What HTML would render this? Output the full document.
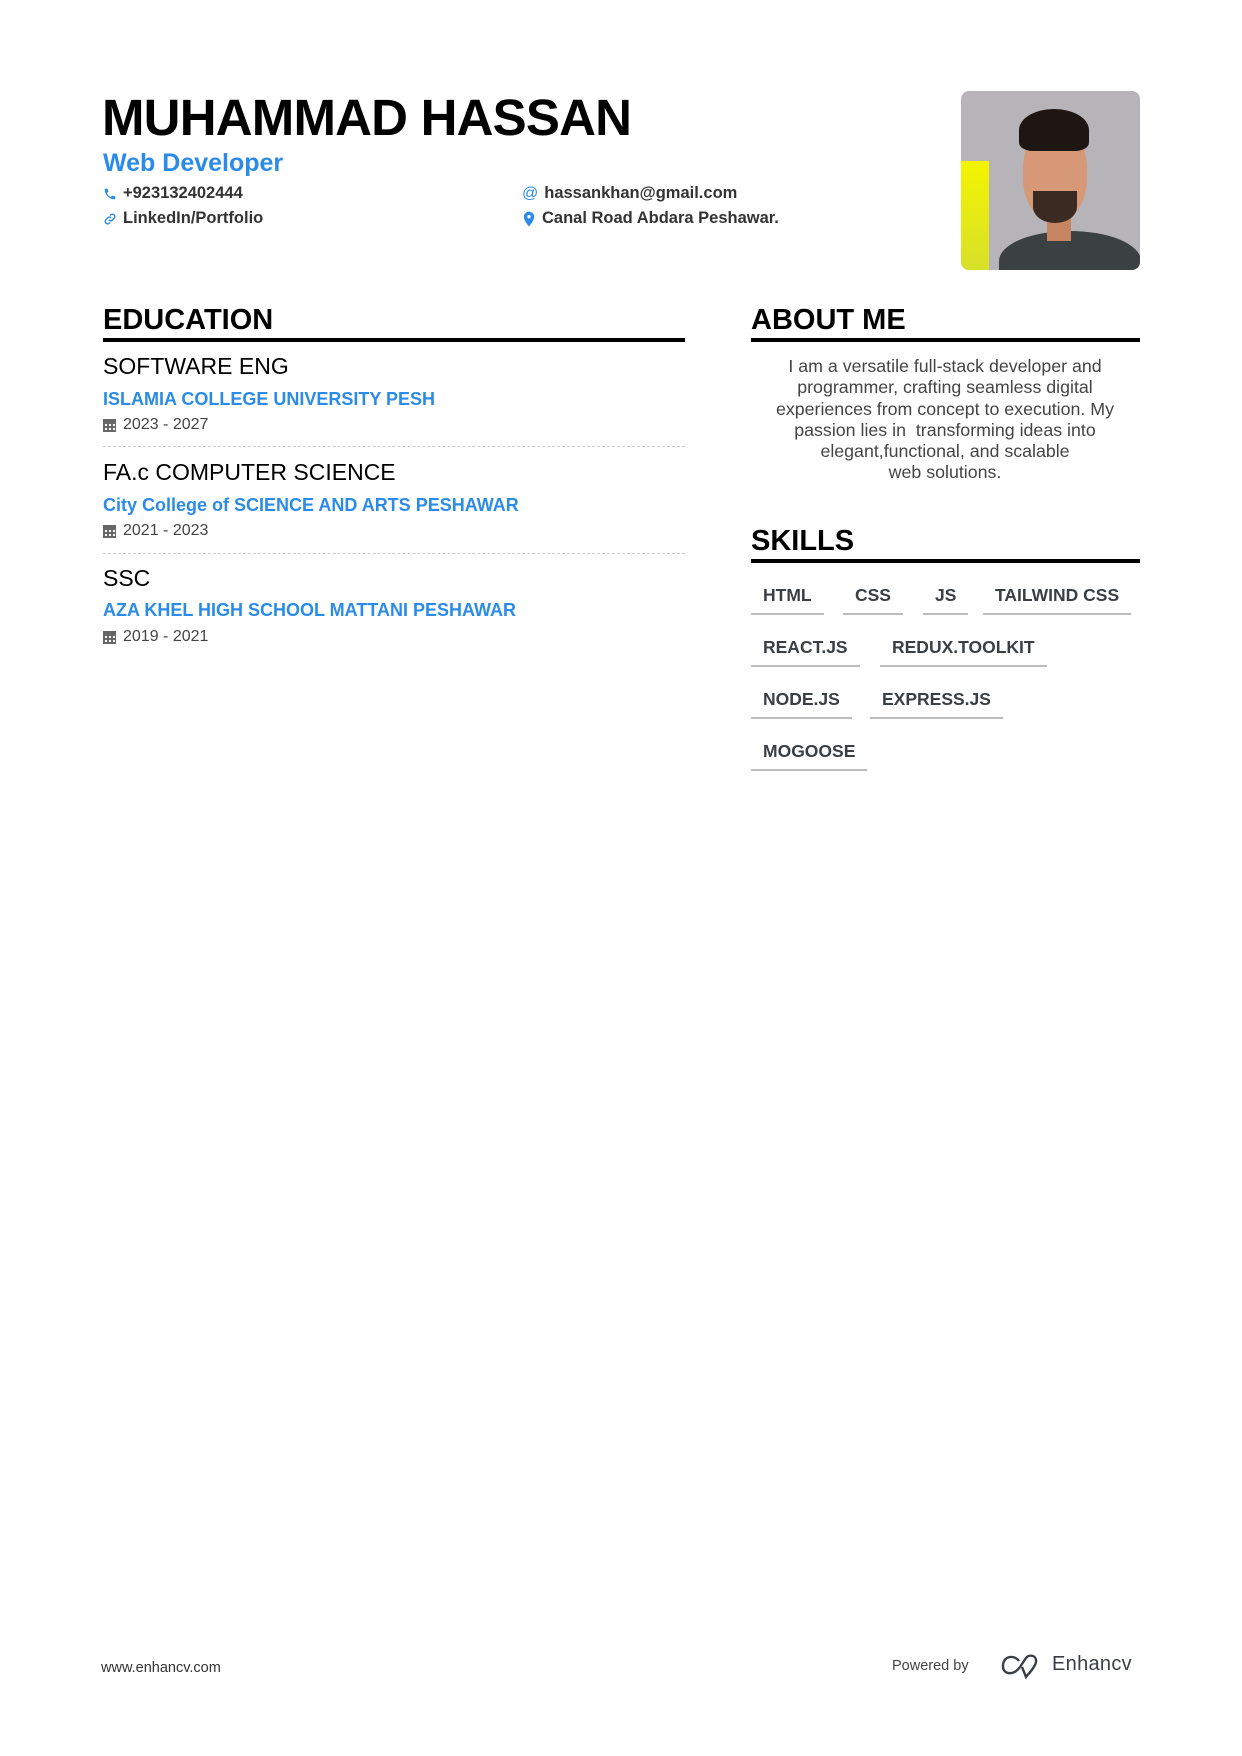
<!DOCTYPE html>
<html><head><meta charset="utf-8"><style>
*{margin:0;padding:0;box-sizing:border-box}
body{width:1242px;height:1756px;background:#fff;font-family:"Liberation Sans",sans-serif;position:relative;overflow:hidden;color:#000}
.a{position:absolute;white-space:nowrap}
.name{left:102px;top:88px;font-size:51px;font-weight:bold;letter-spacing:-0.8px}
.role{left:103px;top:149px;font-size:25px;font-weight:bold;color:#2b8be8}
.ct{font-size:16.5px;font-weight:bold;color:#333;display:flex;align-items:center;gap:6px}
.h{font-size:29px;font-weight:bold;line-height:1}
.rule{position:absolute;height:4px;background:#000}
.deg{left:103px;font-size:23px;color:#000}
.sch{left:103px;font-size:18px;font-weight:bold;color:#2b8be8}
.dt{left:103px;font-size:16px;color:#444;display:flex;align-items:center;gap:7px}
.dash{position:absolute;left:103px;width:582px;border-top:1.5px dashed #ccc}
.about{position:absolute;left:741px;width:408px;top:356px;text-align:center;font-size:17.8px;line-height:21.3px;color:#444}
.chip{position:absolute;font-size:17.5px;font-weight:bold;color:#3a3f44;padding:0 12px;height:30px;border-bottom:2px solid #bbb}
.cal{width:13px;height:13px;background:#666;border-top:3px solid #666;position:relative;background-image:radial-gradient(#fff 1px,transparent 1.3px);background-size:4px 4px;background-position:1px 1px}
</style></head><body>
<div class="a name">MUHAMMAD HASSAN</div>
<div class="a role">Web Developer</div>
<div class="a ct" style="left:103px;top:184px"><svg width="14" height="14" viewBox="0 0 24 24"><path d="M6.6 10.8a15 15 0 006.6 6.6l2.2-2.2c.3-.3.7-.4 1-.2 1.1.4 2.3.6 3.6.6.6 0 1 .4 1 1V20c0 .6-.4 1-1 1C10.6 21 3 13.4 3 4c0-.6.4-1 1-1h3.5c.6 0 1 .4 1 1 0 1.2.2 2.4.6 3.6.1.3 0 .7-.2 1z" fill="#2b8be8"/></svg>+923132402444</div>
<div class="a ct" style="left:103px;top:209px"><svg width="14" height="14" viewBox="0 0 24 24" fill="none" stroke="#2b8be8" stroke-width="2.5"><path d="M10 14a4 4 0 006 0l3-3a4 4 0 00-6-6l-1 1"/><path d="M14 10a4 4 0 00-6 0l-3 3a4 4 0 006 6l1-1"/></svg>LinkedIn/Portfolio</div>
<div class="a ct" style="left:522px;top:184px"><span style="color:#2b8be8;font-weight:normal;font-size:16px">@</span>hassankhan@gmail.com</div>
<div class="a ct" style="left:522px;top:209px"><svg width="14" height="16" viewBox="0 0 24 28"><path d="M12 1a9 9 0 00-9 9c0 7 9 17 9 17s9-10 9-17a9 9 0 00-9-9zm0 12a3 3 0 110-6 3 3 0 010 6z" fill="#2b8be8"/></svg>Canal Road Abdara Peshawar.</div>
<div style="position:absolute;left:961px;top:91px;width:179px;height:179px;border-radius:8px;overflow:hidden;background:#b7b4b9">
<div style="position:absolute;left:0;top:70px;width:28px;height:109px;background:linear-gradient(#f4f400,#d7e02a)"></div>
<div style="position:absolute;left:38px;top:140px;width:142px;height:60px;border-radius:50% 50% 0 0;background:#3b4042"></div>
<div style="position:absolute;left:86px;top:120px;width:24px;height:30px;background:#c48560"></div>
<div style="position:absolute;left:62px;top:35px;width:64px;height:95px;border-radius:45%;background:#d69877"></div>
<div style="position:absolute;left:58px;top:18px;width:70px;height:42px;border-radius:50% 50% 20% 20%;background:#1d1613"></div>
<div style="position:absolute;left:72px;top:100px;width:44px;height:32px;border-radius:0 0 50% 50%;background:#3a2a22"></div>
</div>

<div class="a h" style="left:103px;top:306px">EDUCATION</div>
<div class="rule" style="left:103px;top:338px;width:582px"></div>
<div class="a h" style="left:751px;top:306px">ABOUT ME</div>
<div class="rule" style="left:751px;top:338px;width:389px"></div>

<div class="a deg" style="top:353px">SOFTWARE ENG</div>
<div class="a sch" style="top:389px">ISLAMIA COLLEGE UNIVERSITY PESH</div>
<div class="a dt" style="top:416px"><span class="cal"></span>2023 - 2027</div>
<div class="dash" style="top:446px"></div>
<div class="a deg" style="top:459px">FA.c COMPUTER SCIENCE</div>
<div class="a sch" style="top:495px">City College of SCIENCE AND ARTS PESHAWAR</div>
<div class="a dt" style="top:522px"><span class="cal"></span>2021 - 2023</div>
<div class="dash" style="top:553px"></div>
<div class="a deg" style="top:565px">SSC</div>
<div class="a sch" style="top:600px">AZA KHEL HIGH SCHOOL MATTANI PESHAWAR</div>
<div class="a dt" style="top:628px"><span class="cal"></span>2019 - 2021</div>

<div class="about">I am a versatile full-stack developer and<br>programmer, crafting seamless digital<br>experiences from concept to execution. My<br>passion lies in &nbsp;transforming ideas into<br>elegant,functional, and scalable<br>web solutions.</div>

<div class="a h" style="left:751px;top:527px">SKILLS</div>
<div class="rule" style="left:751px;top:559px;width:389px"></div>

<div class="chip" style="left:751px;top:585px">HTML</div>
<div class="chip" style="left:843px;top:585px">CSS</div>
<div class="chip" style="left:923px;top:585px">JS</div>
<div class="chip" style="left:983px;top:585px">TAILWIND CSS</div>
<div class="chip" style="left:751px;top:637px">REACT.JS</div>
<div class="chip" style="left:880px;top:637px">REDUX.TOOLKIT</div>
<div class="chip" style="left:751px;top:689px">NODE.JS</div>
<div class="chip" style="left:870px;top:689px">EXPRESS.JS</div>
<div class="chip" style="left:751px;top:741px">MOGOOSE</div>

<div class="a" style="left:101px;top:1660px;font-size:14.5px;color:#333">www.enhancv.com</div>
<div class="a" style="left:892px;top:1658px;font-size:14.5px;color:#444">Powered by</div>
<svg class="a" style="left:1000px;top:1653px" width="42" height="26" viewBox="0 0 42 26" fill="none" stroke="#3a3f44" stroke-width="2.4"><path d="M19 8C15 2 4 2 3 12c-1 10 11 11 17 2l6-9c3-4 11-3 10 4-1 6-8 12-10 15L22 14"/></svg>
<div class="a" style="left:1052px;top:1653px;font-size:20px;color:#3a3f44;letter-spacing:0.3px">Enhancv</div>
</body></html>
